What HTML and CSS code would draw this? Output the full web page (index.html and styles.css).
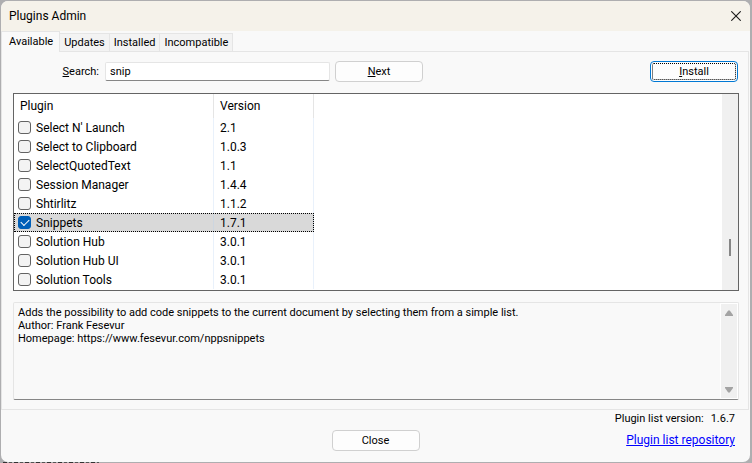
FILE: index.html
```html
<!DOCTYPE html>
<html lang="en">
<head>
<meta charset="utf-8">
<title>Plugins Admin</title>
<link rel="stylesheet" href="styles.css">
</head>
<body>
<main class="dialog">
  <header class="titlebar">
    <h1 class="title">Plugins Admin</h1>
    <button class="close-x" type="button" aria-label="Close window">
      <svg width="10" height="10" viewBox="0 0 10 10" aria-hidden="true"><path d="M0.3 0.3 9.7 9.7M9.7 0.3 0.3 9.7" fill="none" stroke="#1b1b1b" stroke-width="1.1"/></svg>
    </button>
  </header>
  <nav class="tabs" role="tablist">
    <button class="tab active" type="button" role="tab" aria-selected="true">Available</button>
    <button class="tab" type="button" role="tab" aria-selected="false">Updates</button>
    <button class="tab" type="button" role="tab" aria-selected="false">Installed</button>
    <button class="tab" type="button" role="tab" aria-selected="false">Incompatible</button>
  </nav>
  <section class="pane">
    <div class="search-row">
      <label class="search-label" for="search"><u>S</u>earch:</label>
      <input class="search-box" id="search" type="text" value="snip">
      <button class="btn" type="button"><u>N</u>ext</button>
      <button class="btn install" type="button"><u>I</u>nstall</button>
    </div>
    <div class="list">
      <div class="list-body">
        <table class="plugins">
          <thead>
            <tr><th class="name">Plugin</th><th class="version">Version</th></tr>
          </thead>
          <tbody>
            <tr><td><label class="item"><input type="checkbox">Select N' Launch</label></td><td>2.1</td></tr>
            <tr><td><label class="item"><input type="checkbox">Select to Clipboard</label></td><td>1.0.3</td></tr>
            <tr><td><label class="item"><input type="checkbox">SelectQuotedText</label></td><td>1.1</td></tr>
            <tr><td><label class="item"><input type="checkbox">Session Manager</label></td><td>1.4.4</td></tr>
            <tr><td><label class="item"><input type="checkbox">Shtirlitz</label></td><td>1.1.2</td></tr>
            <tr class="selected"><td><label class="item"><input type="checkbox" checked>Snippets</label></td><td>1.7.1</td></tr>
            <tr><td><label class="item"><input type="checkbox">Solution Hub</label></td><td>3.0.1</td></tr>
            <tr><td><label class="item"><input type="checkbox">Solution Hub UI</label></td><td>3.0.1</td></tr>
            <tr><td><label class="item"><input type="checkbox">Solution Tools</label></td><td>3.0.1</td></tr>
          </tbody>
        </table>
      </div>
      <div class="list-scroll"><div class="thumb"></div></div>
    </div>
    <div class="description">
      <p class="description-text">Adds the possibility to add code snippets to the current document by selecting them from a simple list.<br>Author: Frank Fesevur<br>Homepage: https://www.fesevur.com/nppsnippets</p>
      <div class="description-scroll">
        <svg width="8" height="6" viewBox="0 0 8 6" aria-hidden="true"><path d="M3.2 0.4h1.6L8 5v1H0V5z" fill="#a3a3a3"/></svg>
        <svg width="8" height="6" viewBox="0 0 8 6" aria-hidden="true"><path d="M3.2 5.6h1.6L8 1V0H0v1z" fill="#a3a3a3"/></svg>
      </div>
    </div>
  </section>
  <footer class="footer">
    <button class="btn close" type="button">Close</button>
    <div class="meta">
      <p class="list-version"><span>Plugin list version:</span><span>1.6.7</span></p>
      <a class="repo" href="#">Plugin list repository</a>
    </div>
  </footer>
</main>
</body>
</html>
```
FILE: styles.css
```css
* {
  box-sizing: border-box;
}

body {
  margin: 0;
  padding: 1px 2px 1px 1px;
  min-height: 100vh;
  display: flex;
  background:
    repeating-linear-gradient(90deg, #333 0 4px, #aeaeb0 4px 6px, #555 6px 9px, #aeaeb0 9px 11px) 3px 100% / 96px 1px no-repeat,
    #aeaeb0;
  color: #000;
  font: 11px/13px Roboto, "Open Sans", sans-serif;
}

h1,
p {
  margin: 0;
  font: inherit;
}

button,
input {
  font: inherit;
  color: inherit;
}

.dialog {
  flex: 1;
  min-width: 0;
  display: flex;
  flex-direction: column;
  background: #f9f9f9;
  border-radius: 7px;
  overflow: hidden;
}

.titlebar {
  display: flex;
  align-items: center;
  justify-content: space-between;
  height: 30px;
  padding: 0 9px 0 8px;
  background: #f5f2ea;
}

.title {
  font-size: 12px;
  line-height: 16px;
}

.close-x {
  display: flex;
  padding: 0;
  border: 0;
  background: none;
}

.tabs {
  display: flex;
  align-items: flex-end;
  height: 20px;
}

.tab {
  height: 18px;
  padding: 0 4px;
  border: 1px solid #e5e5e5;
  border-width: 1px 1px 0 0;
  background: #f3f3f3;
}

.tab.active {
  height: 21px;
  padding: 0 6px 2px 7px;
  margin-bottom: -1px;
  border-left-width: 1px;
  background: #f9f9f9;
  z-index: 1;
}

.pane {
  display: flex;
  flex: 1;
  flex-direction: column;
  margin-right: 1px;
  padding: 9px 9px 9px 11px;
  border: 1px solid #e5e5e5;
}

.search-row {
  display: flex;
  align-items: center;
  height: 21px;
  margin-bottom: 11px;
  padding-right: 1px;
}

.search-label {
  width: 92px;
  padding-right: 6px;
  text-align: right;
}

.search-box {
  width: 225px;
  height: 19px;
  margin-right: 5px;
  padding: 0 4px;
  border: 1px solid #e5e5e5;
  border-bottom-color: #868686;
  border-radius: 2px;
  background: #fff;
  outline: 0;
}

.btn {
  width: 88px;
  height: 21px;
  padding: 0;
  border: 1px solid #d0d0d0;
  border-radius: 4px;
  background: #fdfdfd;
}

.install {
  margin-left: auto;
  border-color: #0078d4;
  outline: 1px dotted #000;
  outline-offset: -3px;
}

.list {
  display: flex;
  border: 1px solid #646464;
  background: #fff;
}

.list-body {
  flex: 1;
  padding-bottom: 1px;
}

.plugins {
  width: 300px;
  border-collapse: separate;
  border-spacing: 0;
  table-layout: fixed;
  font-size: 12px;
  line-height: 17px;
}

.plugins th,
.plugins td {
  height: 19px;
  padding: 2px 6px 0;
  text-align: left;
  font-weight: 400;
  border-right: 1px solid #e9f1fb;
}

.plugins th {
  height: 24px;
  padding-top: 0;
  border-right-color: #e5e5e5;
}

.plugins .name {
  width: 200px;
}

.plugins td:first-child {
  padding-left: 4px;
}

.item {
  display: flex;
  align-items: center;
  gap: 5px;
  height: 17px;
}

.item input {
  appearance: none;
  width: 13px;
  height: 13px;
  margin: 0 0 2px;
  border: 1px solid #636363;
  border-radius: 3px;
  background: #f3f3f3;
}

.item input:checked {
  display: grid;
  place-items: center;
  border-color: #005fb8;
  background: #005fb8;
}

.item input:checked::after {
  content: "";
  width: 7px;
  height: 4px;
  margin-bottom: 2px;
  border: solid #fff;
  border-width: 0 0 1px 1px;
  transform: rotate(-45deg);
}

.selected {
  background: #d9d9d9;
  outline: 1px dotted #000;
  outline-offset: -1px;
}

.selected td {
  border-right-color: #cdd6e0;
}

.list-scroll {
  display: flex;
  flex-direction: column;
  align-items: center;
  justify-content: flex-end;
  width: 16px;
  padding-bottom: 34px;
  background: #f0f0f0;
}

.thumb {
  width: 2px;
  height: 17px;
  background: #868686;
}

.description {
  display: flex;
  flex: 1;
  margin-top: 11px;
  border: 1px solid #e5e5e5;
  border-bottom-color: #868686;
  border-radius: 2px;
}

.description-text {
  flex: 1;
  padding: 3px 4px;
}

.description-scroll {
  display: flex;
  flex-direction: column;
  align-items: center;
  justify-content: space-between;
  width: 18px;
  padding: 6px 0 5px;
  border: 1px solid #fff;
  background: #f0f0f0;
}

.footer {
  display: grid;
  grid-template-columns: 1fr 88px 1fr;
  height: 52px;
}

.close {
  grid-column: 2;
  margin-top: 20px;
}

.meta {
  display: flex;
  flex-direction: column;
  align-items: flex-end;
  gap: 7px;
  padding: 2px 15px 0 0;
}

.list-version {
  display: flex;
  gap: 7px;
}

.repo {
  color: #00f;
  font-size: 12px;
  line-height: 16px;
}
```
